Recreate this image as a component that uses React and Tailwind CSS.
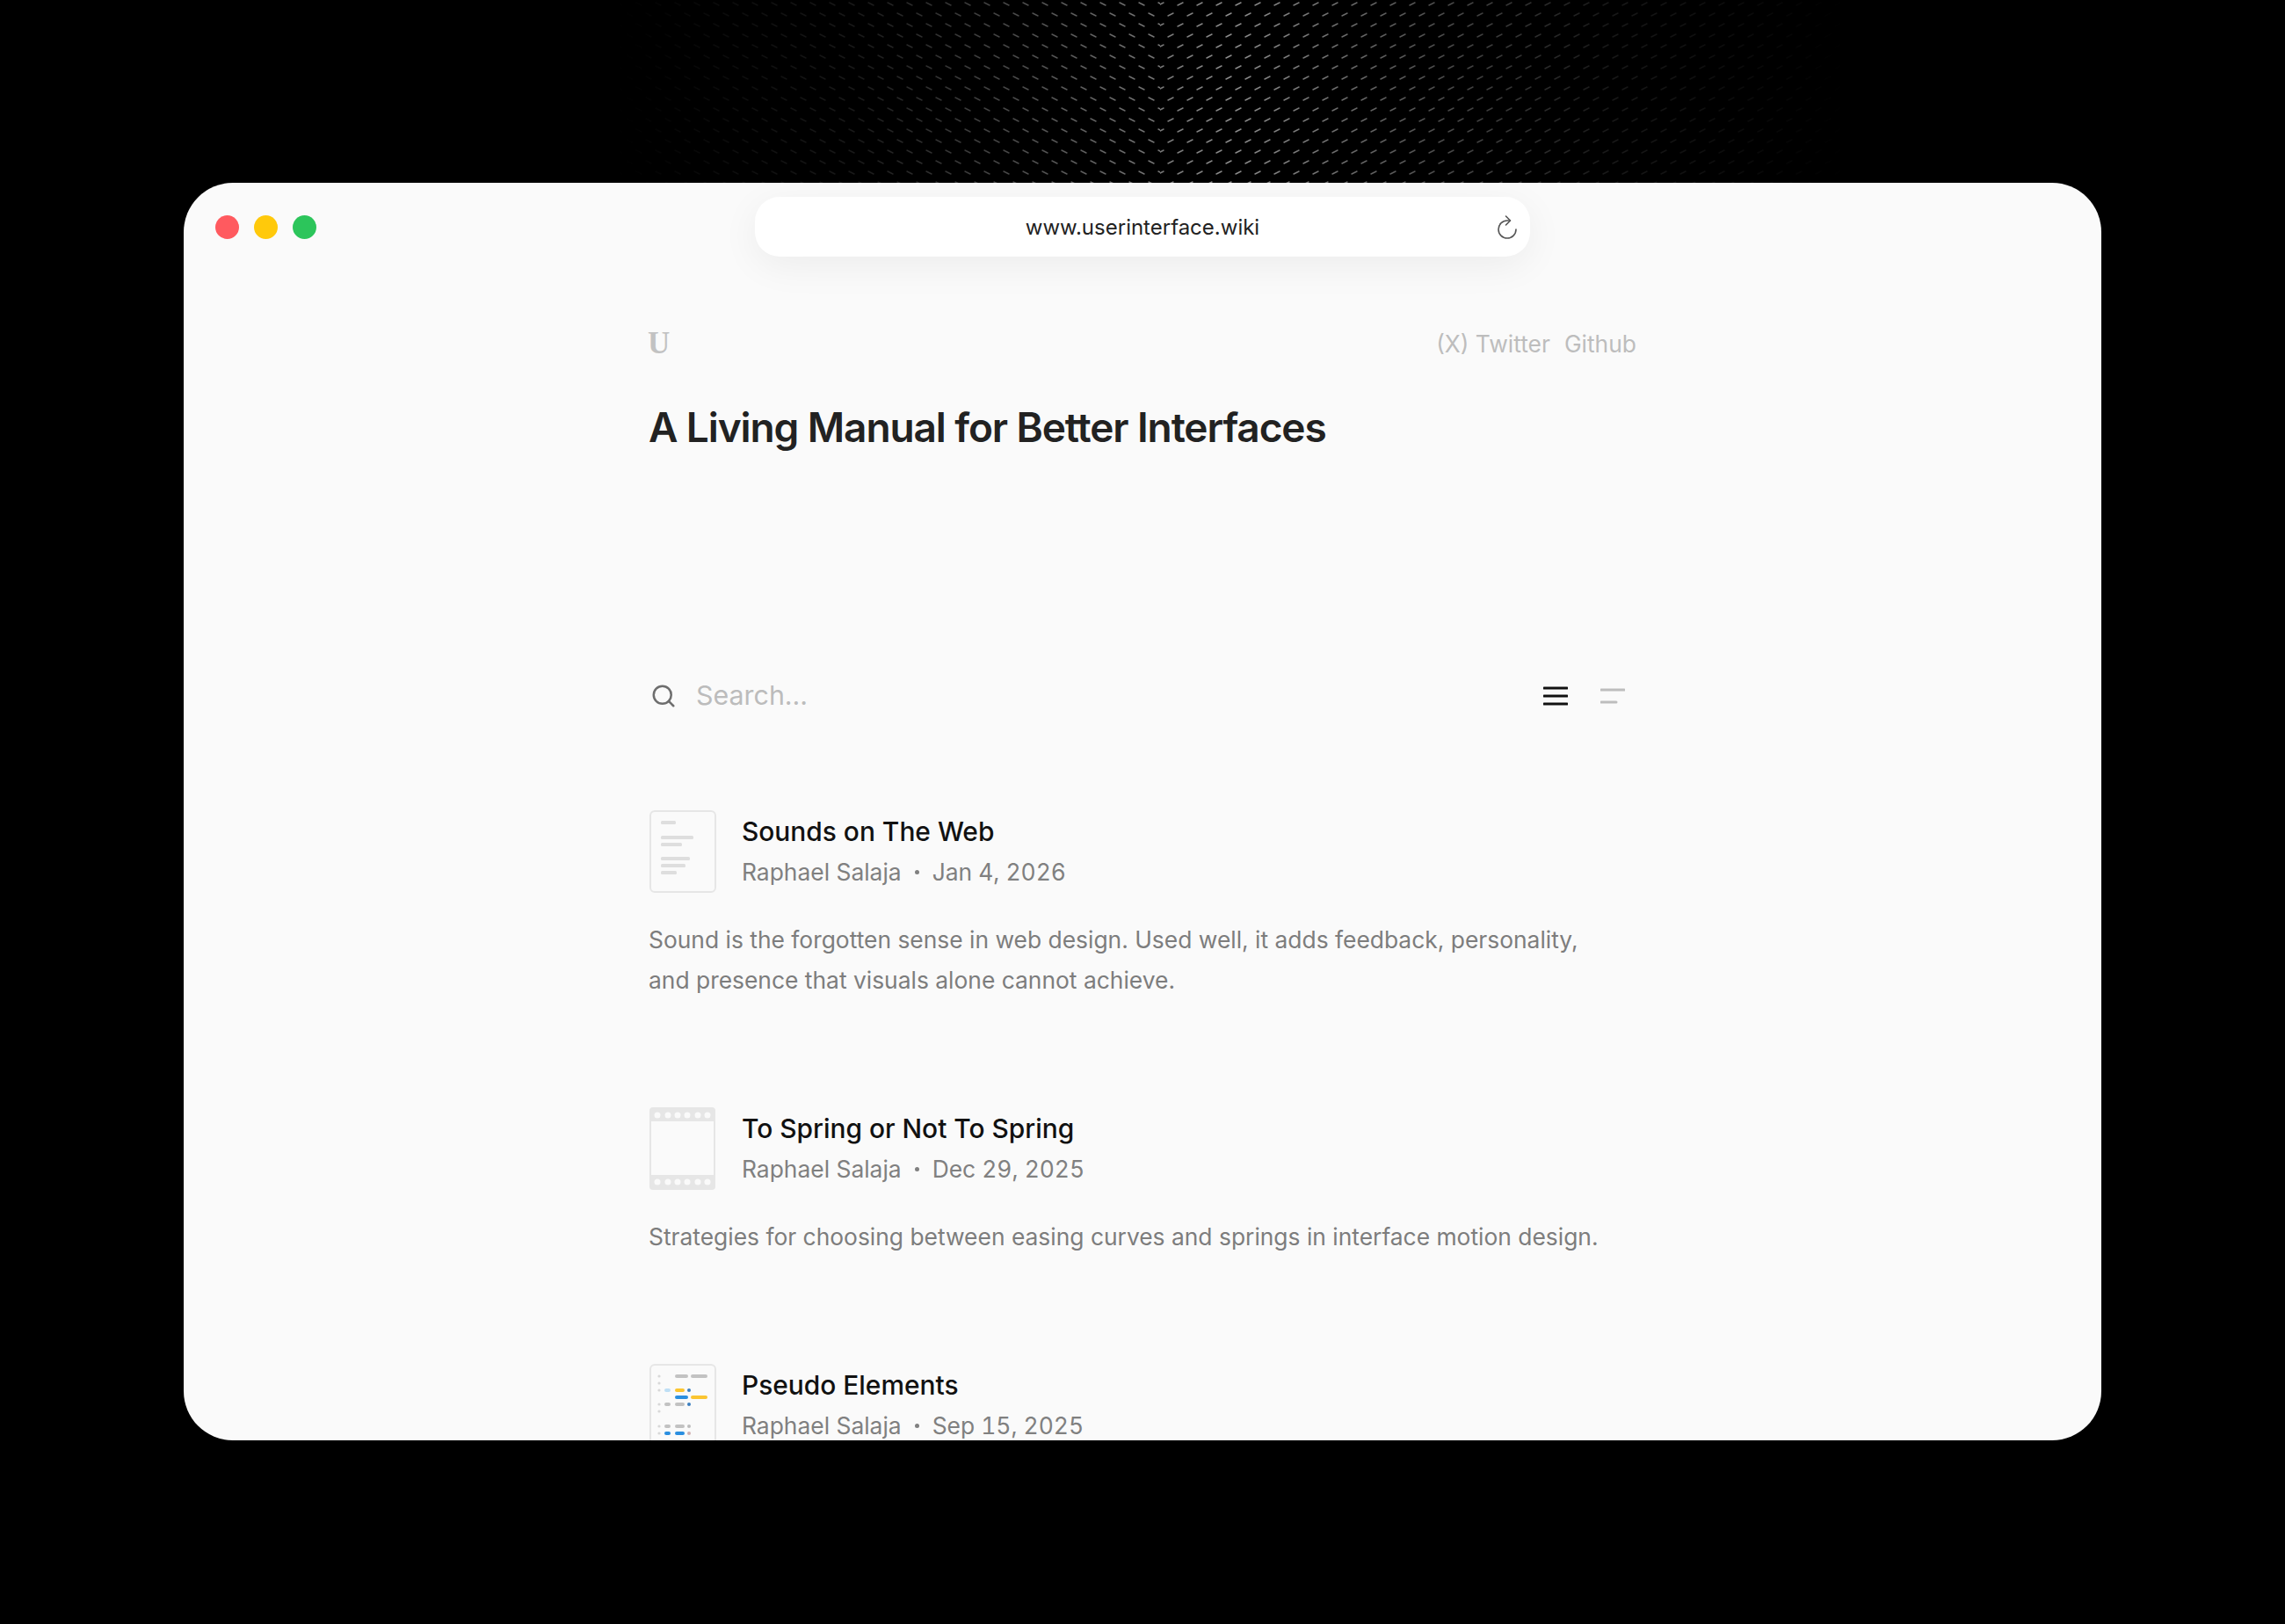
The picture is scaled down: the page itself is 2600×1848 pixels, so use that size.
import { Search } from 'lucide-react';

const posts = [
  {
    title: 'Sounds on The Web',
    date: 'Jan 4, 2026',
    text: 'Sound is the forgotten sense in web design. Used well, it adds feedback, personality, and presence that visuals alone cannot achieve.',
    thumb: 'doc',
  },
  {
    title: 'To Spring or Not To Spring',
    date: 'Dec 29, 2025',
    text: 'Strategies for choosing between easing curves and springs in interface motion design.',
    thumb: 'film',
  },
  { title: 'Pseudo Elements', date: 'Sep 15, 2025', text: '', thumb: 'code' },
];

function DocThumb() {
  return (
    <svg width="78" height="96" viewBox="0 0 78 96">
      <rect x="2" y="2" width="74" height="92" rx="5" fill="#fafafa" stroke="#e6e6e6" strokeWidth="2" />
      <g fill="#dedede">
        <rect x="14" y="13" width="17" height="4" rx="1.5" />
        <rect x="14" y="30" width="37" height="4" rx="1.5" />
        <rect x="14" y="38" width="24" height="4" rx="1.5" />
        <rect x="14" y="54" width="33" height="4" rx="1.5" />
        <rect x="14" y="62" width="28" height="4" rx="1.5" />
        <rect x="14" y="70" width="18" height="4" rx="1.5" />
      </g>
    </svg>
  );
}

function FilmThumb() {
  const holes = [10, 22, 33, 44, 56, 67];
  return (
    <svg width="78" height="96" viewBox="0 0 78 96">
      <rect x="1" y="1" width="75" height="94" rx="4" fill="#e6e6e6" />
      <rect x="3" y="17" width="71" height="61" fill="#fafafa" />
      {holes.map((x) => (
        <g key={x} fill="#fafafa">
          <circle cx={x} cy="10" r="3.5" />
          <circle cx={x} cy="86" r="3.5" />
        </g>
      ))}
    </svg>
  );
}

function CodeThumb() {
  const bar = (x, y, w, fill) => <rect key={`${x}-${y}`} x={x} y={y - 2} width={w} height="4" rx="2" fill={fill} />;
  return (
    <svg width="78" height="96" viewBox="0 0 78 96">
      <rect x="2" y="2" width="74" height="92" rx="5" fill="#fafafa" stroke="#e6e6e6" strokeWidth="2" />
      {[15, 23, 31, 47, 55, 72, 80].map((y) => (
        <circle key={y} cx="12" cy={y} r="1.6" fill="#d8d8d8" />
      ))}
      {bar(30, 15, 15, '#c2c2c2')}
      {bar(48, 15, 19, '#c2c2c2')}
      {bar(18, 31, 7, '#bfdff5')}
      {bar(30, 31, 11, '#fbc531')}
      <circle cx="46" cy="31" r="2" fill="#3b7fc0" />
      {bar(30, 39, 15, '#2b8fe0')}
      {bar(48, 39, 19, '#fbc531')}
      {bar(18, 47, 7, '#c2c2c2')}
      {bar(30, 47, 11, '#c2c2c2')}
      <circle cx="46" cy="47" r="2" fill="#3b7fc0" />
      {bar(18, 72, 7, '#c2c2c2')}
      {bar(30, 72, 11, '#c2c2c2')}
      <circle cx="46" cy="72" r="2" fill="#bdbdbd" />
      {bar(18, 80, 7, '#2b8fe0')}
      {bar(30, 80, 11, '#2b8fe0')}
      <circle cx="46" cy="80" r="2" fill="#d0b0b0" />
    </svg>
  );
}

const thumbs = { doc: DocThumb, film: FilmThumb, code: CodeThumb };

// the faint herringbone moire behind the window
function Weave() {
  return (
    <svg className="absolute top-0 left-[700px]" width="1400" height="208" viewBox="0 0 1400 208">
      <defs>
        <pattern id="weave-l" width="22" height="24" patternUnits="userSpaceOnUse">
          <path d="M2 3l6 3M13 15l6 3" stroke="#ffffff" strokeWidth="1.5" strokeLinecap="round" />
        </pattern>
        <pattern id="weave-r" width="22" height="24" patternUnits="userSpaceOnUse">
          <path d="M2 6l6-3M13 18l6-3" stroke="#ffffff" strokeWidth="1.5" strokeLinecap="round" />
        </pattern>
        <linearGradient id="weave-fade">
          <stop offset="0" stopColor="#ffffff" stopOpacity="0" />
          <stop offset="0.2" stopColor="#ffffff" stopOpacity="0.1" />
          <stop offset="0.5" stopColor="#ffffff" stopOpacity="0.55" />
          <stop offset="0.8" stopColor="#ffffff" stopOpacity="0.1" />
          <stop offset="1" stopColor="#ffffff" stopOpacity="0" />
        </linearGradient>
        <mask id="weave-mask">
          <rect width="1400" height="208" fill="url(#weave-fade)" />
        </mask>
      </defs>
      <g mask="url(#weave-mask)">
        <rect width="620" height="208" fill="url(#weave-l)" />
        <rect x="620" width="780" height="208" fill="url(#weave-r)" />
      </g>
    </svg>
  );
}

function Post({ post }) {
  const Thumb = thumbs[post.thumb];
  return (
    <article>
      <div className="flex items-center gap-[28px]">
        <div className="h-[96px] w-[78px] shrink-0">
          <Thumb />
        </div>
        <div>
          <h2 className="text-[29.9px] leading-[46px] font-medium text-[#111111]">{post.title}</h2>
          <p className="flex items-center text-[26.4px] leading-[46px] text-[#808080]">
            Raphael Salaja
            <span className="mx-[15px] h-[5px] w-[5px] rounded-full bg-[#808080]" />
            <span className="tabular-nums">{post.date}</span>
          </p>
        </div>
      </div>
      {post.text && (
        <p className="mt-[29px] max-w-[1095px] text-[26.4px] leading-[46px] text-[#7d7d7d]">{post.text}</p>
      )}
    </article>
  );
}

export default function App() {
  return (
    <div
      className="relative flex h-[1848px] w-[2600px] justify-center overflow-hidden bg-black pt-[208px]"
      style={{ fontFamily: 'Inter, "Liberation Sans", sans-serif' }}
    >
      <Weave />
      <div className="relative h-[1431px] w-[2182px] overflow-hidden rounded-[56px] bg-[#fafafa]">
        <div className="flex items-center pl-[36px] pt-[16px]">
          <div className="flex w-[614px] gap-[17px]">
            <span className="h-[27px] w-[27px] rounded-full bg-[#ff5a5f]" />
            <span className="h-[27px] w-[27px] rounded-full bg-[#ffc90b]" />
            <span className="h-[27px] w-[27px] rounded-full bg-[#2cc55b]" />
          </div>
          <div className="flex h-[68px] w-[882px] items-center rounded-[28px] bg-white pl-[40px] pr-[12px] shadow-[0_10px_44px_rgba(0,0,0,0.06)]">
            <span className="flex-1 pt-[2px] text-center text-[24px] text-[#222222]">www.userinterface.wiki</span>
            <svg width="28" height="30" viewBox="0 0 28 30" fill="none" stroke="#555555" strokeWidth="1.6" strokeLinecap="round" strokeLinejoin="round">
              <path d="M24 18A10 10 0 1 1 14 8h3" />
              <path d="M12.5 3l5 5-5 5" />
            </svg>
          </div>
        </div>
        <div className="mx-auto w-[1124px] pt-[77px]">
          <header className="flex h-[44px] items-center justify-between">
            <span className="-mt-[1px] -ml-[1px] font-['Liberation_Serif'] text-[35px] leading-[42px] font-bold text-[#c2c2c2]">U</span>
            <nav className="mt-[2px] flex gap-[16px] text-[26.4px] text-[#bdbdbd]">
              <span>(X) Twitter</span>
              <span>Github</span>
            </nav>
          </header>
          <h1 className="mt-[41px] text-[46px] leading-[64px] font-semibold tracking-[-1.1px] text-[#222222]">
            A Living Manual for Better Interfaces
          </h1>
          <div className="mt-[251px] flex items-center">
            <Search size={30} strokeWidth={2} className="ml-[2px] text-[#6e6e6e]" />
            <span className="ml-[22px] flex-1 text-[30.4px] leading-[45px] text-[#bcbcbc]">Search...</span>
            <div className="mr-[13px] flex items-center gap-[37px]">
              <svg width="28" height="24" viewBox="0 0 28 24">
                <path d="M1 3h26M1 12h26M1 21h26" stroke="#111111" strokeWidth="3" strokeLinecap="round" />
              </svg>
              <svg width="28" height="24" viewBox="0 0 28 24">
                <path d="M1 5h26M1 19h17" stroke="#bdbdbd" strokeWidth="3" strokeLinecap="round" />
              </svg>
            </div>
          </div>
          <div className="mt-[107px] flex flex-col gap-[121px]">
            {posts.map((post) => (
              <Post key={post.title} post={post} />
            ))}
          </div>
        </div>
      </div>
    </div>
  );
}
